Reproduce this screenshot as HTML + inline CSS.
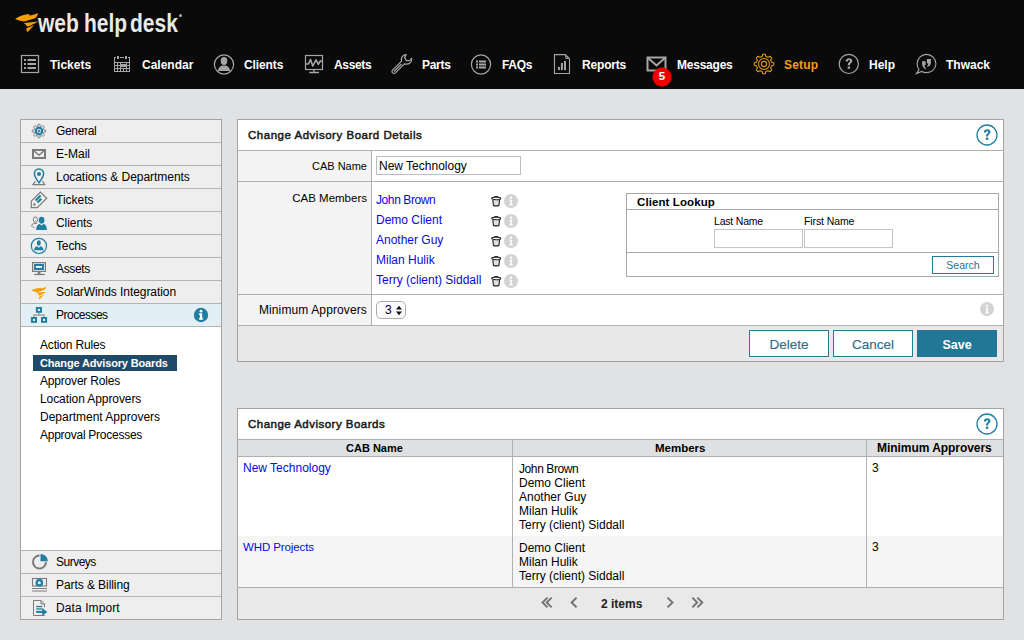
<!DOCTYPE html>
<html><head><meta charset="utf-8">
<style>
*{box-sizing:border-box;margin:0;padding:0}
html,body{width:1024px;height:640px;overflow:hidden;background:#e1e2e4;font-family:"Liberation Sans",sans-serif;color:#000}
.a{position:absolute;white-space:nowrap}
#hdr{position:absolute;left:0;top:0;width:1024px;height:89px;background:#0a0a0a}
.nav{position:absolute;top:58px;font-size:12px;font-weight:bold;color:#fff;line-height:14px}
.nicon{position:absolute}
#side{position:absolute;left:20px;top:119px;width:202px;height:501px;background:#fff;border:1px solid #a3a3a3}
.srow{position:absolute;left:0;width:200px;height:23px;background:#eeeeee;border-bottom:1px solid #b3b3b3}
.srow .t{position:absolute;left:35px;top:4px;font-size:12px;line-height:14px;color:#000}
.srow svg{position:absolute}
.sub{position:absolute;left:19px;font-size:12px;line-height:14px;color:#000}
.panel{position:absolute;left:237px;width:767px;background:#fff;border:1px solid #a3a3a3}
.ptitle{position:absolute;left:10px;font-size:11.5px;font-weight:bold;color:#222;line-height:14px}
.lbl{position:absolute;font-size:12px;line-height:14px;color:#000;text-align:right}
.lnk{position:absolute;font-size:12px;line-height:14px;color:#0808e6}
</style></head><body>
<div id="hdr">
<svg class="a" style="left:0;top:0" width="50" height="40" viewBox="0 0 50 40">
<path fill="#f5a000" d="M15.2,19 C19,16.2 24.5,14.6 29.6,14.1 L28.9,15.6 C32.5,15 36,14 38,12.9 C37.6,15.4 36.6,17 35,18.2 C31,19.6 27,20.6 23.8,21.6 C20.5,21 17.5,20.1 15.2,19 Z"/>
<path fill="#f5a000" d="M24,22.9 L38.3,21.4 C35,23.4 31,25.3 27.6,26.7 Z"/>
<path fill="#f5a000" d="M26.1,28.4 L34.5,25 L27.3,32.3 Z"/>
</svg>
<div class="a" style="left:38px;top:11px;font-size:25px;font-weight:bold;color:#e9e9e9;line-height:24px;transform:scaleX(0.84);transform-origin:0 0">web</div><div class="a" style="left:84px;top:11px;font-size:25px;font-weight:bold;color:#e9e9e9;line-height:24px;transform:scaleX(0.84);transform-origin:0 0">help</div><div class="a" style="left:130px;top:11px;font-size:25px;font-weight:bold;color:#e9e9e9;line-height:24px;transform:scaleX(0.84);transform-origin:0 0">desk</div>
<div class="a" style="left:179px;top:14px;width:3px;height:3px;border-radius:50%;background:#aaa"></div>

<svg class="a" style="left:20px;top:54px" width="20" height="20" viewBox="0 0 20 20" fill="none" stroke="#a6a6a6">
<rect x="1.5" y="1.5" width="17" height="17" stroke-width="1.2"/>
<g fill="#a6a6a6" stroke="none"><rect x="4" y="5" width="2" height="2"/><rect x="4" y="9" width="2" height="2"/><rect x="4" y="13" width="2" height="2"/>
<rect x="7.5" y="5" width="8.5" height="2"/><rect x="7.5" y="9" width="8.5" height="2"/><rect x="7.5" y="13" width="8.5" height="2"/></g>
</svg>
<div class="nav" style="left:50px">Tickets</div>

<svg class="a" style="left:110px;top:52px" width="24" height="24" viewBox="0 0 24 24" shape-rendering="crispEdges"><g fill="#a6a6a6"><rect x="4" y="5" width="1" height="15"/><rect x="19" y="5" width="1" height="15"/><rect x="4" y="19" width="16" height="1"/><rect x="4" y="5" width="2" height="1"/><rect x="18" y="5" width="2" height="1"/><rect x="7" y="4" width="2" height="3"/><rect x="15" y="4" width="2" height="3"/><rect x="10" y="5" width="4" height="1"/><rect x="4" y="10" width="16" height="1"/><rect x="4" y="13" width="16" height="1"/><rect x="4" y="16" width="16" height="1"/><rect x="7" y="10" width="1" height="10"/><rect x="10" y="10" width="1" height="10"/><rect x="13" y="10" width="1" height="10"/><rect x="16" y="10" width="1" height="10"/></g><rect x="11" y="11" width="5" height="2" fill="#0b0b0b"/><rect x="11" y="14" width="5" height="2" fill="#0b0b0b"/><rect x="11" y="12" width="5" height="3" fill="#a6a6a6"/></svg>
<div class="nav" style="left:142px">Calendar</div>

<svg class="a" style="left:213px;top:54px" width="22" height="22" viewBox="0 0 22 22">
<circle cx="11" cy="10.5" r="9.6" fill="none" stroke="#a6a6a6" stroke-width="1.2"/>
<ellipse cx="11" cy="7" rx="3.3" ry="4" fill="#a6a6a6"/>
<path d="M5,17 C5,13.5 7.5,11.5 11,11.5 C14.5,11.5 17,13.5 17,17 Z" fill="#a6a6a6"/>
</svg>
<div class="nav" style="left:244px;letter-spacing:-0.1px">Clients</div>

<svg class="a" style="left:304px;top:54px" width="20" height="20" viewBox="0 0 20 20" fill="none" stroke="#a6a6a6">
<rect x="1.5" y="1.5" width="17" height="14" stroke-width="1.2"/>
<path d="M2.1,10 H4.5 L6.5,5.4 L8.8,12 L12,5.8 L14.4,10.4 L16.3,7 H18" stroke-width="1.6" stroke-linejoin="round"/>
<path d="M9.9,15.5 V18 M5.2,18.5 H15" stroke-width="1.3"/>
</svg>
<div class="nav" style="left:334px;letter-spacing:-0.34px">Assets</div>

<svg class="a" style="left:391px;top:54px" width="22" height="21" viewBox="0 0 22 21" fill="none" stroke="#a6a6a6" stroke-width="1.2" stroke-linejoin="round">
<path d="M10.6,7.1 C9.6,3.6 12,0.8 15.2,0.7 L13.6,3.6 L15.4,6.6 L18.6,6.6 L20.7,4.4 C21.3,8.2 18,11 13.4,9.9 L4.4,18.9 C3.6,19.7 2.4,19.7 1.6,18.9 C0.8,18.1 0.8,16.9 1.6,16.1 Z"/>
<path d="M3,17.5 L10.5,10"/>
</svg>
<div class="nav" style="left:422px;letter-spacing:-0.3px">Parts</div>

<svg class="a" style="left:470px;top:54px" width="22" height="22" viewBox="0 0 22 22">
<circle cx="11" cy="10.5" r="9.6" fill="none" stroke="#a6a6a6" stroke-width="1.2"/>
<g fill="#a6a6a6"><rect x="6" y="6.5" width="2" height="2"/><rect x="6" y="9.5" width="2" height="2"/><rect x="6" y="12.5" width="2" height="2"/>
<rect x="9" y="6.5" width="7" height="2"/><rect x="9" y="9.5" width="7" height="2"/><rect x="9" y="12.5" width="7" height="2"/></g>
</svg>
<div class="nav" style="left:502px;letter-spacing:-0.34px">FAQs</div>

<svg class="a" style="left:553px;top:54px" width="18" height="21" viewBox="0 0 18 21" fill="none" stroke="#a6a6a6" stroke-width="1.1">
<path d="M1.5,0.6 H12.3 L16.5,4.8 V19.5 H1.5 Z"/>
<path d="M12.6,1.6 V4.5 H15.5 Z" stroke-width="0.9"/>
<g fill="#a6a6a6" stroke="none"><rect x="4.9" y="12.9" width="2" height="3.2"/><rect x="7.9" y="8.9" width="2" height="7.2"/><rect x="11" y="6.9" width="2" height="9.2"/></g>
</svg>
<div class="nav" style="left:582px;letter-spacing:-0.18px">Reports</div>

<svg class="a" style="left:646px;top:56px" width="22" height="16" viewBox="0 0 22 16" fill="none" stroke="#a6a6a6" stroke-width="2">
<rect x="1.5" y="1.5" width="18" height="13"/>
<path d="M1.5,1.5 L10.5,9.5 L19.5,1.5"/>
</svg>
<svg class="a" style="left:652px;top:67px" width="20" height="20" viewBox="0 0 20 20"><polygon points="20.00,10.00 18.84,11.07 19.71,12.39 18.32,13.16 18.85,14.65 17.32,15.06 17.49,16.63 15.90,16.66 15.68,18.23 14.14,17.88 13.55,19.35 12.13,18.64 11.21,19.93 10.00,18.90 8.79,19.93 7.87,18.64 6.45,19.35 5.86,17.88 4.32,18.23 4.10,16.66 2.51,16.63 2.68,15.06 1.15,14.65 1.68,13.16 0.29,12.39 1.16,11.07 0.00,10.00 1.16,8.93 0.29,7.61 1.68,6.84 1.15,5.35 2.68,4.94 2.51,3.37 4.10,3.34 4.32,1.77 5.86,2.12 6.45,0.65 7.87,1.36 8.79,0.07 10.00,1.10 11.21,0.07 12.13,1.36 13.55,0.65 14.14,2.12 15.68,1.77 15.90,3.34 17.49,3.37 17.32,4.94 18.85,5.35 18.32,6.84 19.71,7.61 18.84,8.93" fill="#f20000"/></svg>
<div class="a" style="left:652px;top:70px;width:20px;text-align:center;font-size:11.5px;font-weight:bold;color:#fff;line-height:13px">5</div>
<div class="nav" style="left:677px;letter-spacing:-0.23px">Messages</div>

<svg class="a" style="left:753px;top:53px" width="22" height="22" viewBox="0 0 22 22" fill="none" stroke="#e39b1f" stroke-width="1.1">
<path d="M20.71,9.70 L20.71,12.30 L18.58,12.82 L17.65,15.08 L18.79,16.95 L16.95,18.79 L15.08,17.65 L12.82,18.58 L12.30,20.71 L9.70,20.71 L9.18,18.58 L6.92,17.65 L5.05,18.79 L3.21,16.95 L4.35,15.08 L3.42,12.82 L1.29,12.30 L1.29,9.70 L3.42,9.18 L4.35,6.92 L3.21,5.05 L5.05,3.21 L6.92,4.35 L9.18,3.42 L9.70,1.29 L12.30,1.29 L12.82,3.42 L15.08,4.35 L16.95,3.21 L18.79,5.05 L17.65,6.92 L18.58,9.18 Z" stroke-linejoin="round"/>
<circle cx="11" cy="11" r="5.5"/>
<circle cx="11" cy="11" r="2.6"/>
</svg>
<div class="nav" style="left:784px;color:#f79b1c;letter-spacing:0.19px">Setup</div>

<svg class="a" style="left:838px;top:53px" width="22" height="22" viewBox="0 0 22 22">
<circle cx="10.8" cy="10.9" r="9.6" fill="none" stroke="#a6a6a6" stroke-width="1.2"/>
<path d="M7.6,8.4 C7.6,6.2 9.2,5.2 11,5.2 C12.9,5.2 14.3,6.3 14.3,8 C14.3,9.9 12,10.3 12,11.8 V12.3 H9.8 V11.6 C9.8,9.6 12,9.3 12,8.1 C12,7.5 11.6,7.1 11,7.1 C10.3,7.1 9.9,7.6 9.9,8.4 Z" fill="#a6a6a6"/>
<rect x="9.7" y="13.5" width="2.4" height="2.3" fill="#a6a6a6"/>
</svg>
<div class="nav" style="left:869px">Help</div>

<svg class="a" style="left:914px;top:53px" width="24" height="23" viewBox="0 0 24 23" fill="none" stroke="#a6a6a6" stroke-width="1.1">
<path d="M5,16.6 C3.8,15 3.1,13 3.1,10.8 C3.1,5.6 7.3,1.4 12.5,1.4 C17.7,1.4 21.9,5.6 21.9,10.8 C21.9,16 17.7,19.6 12.5,19.6 C10.8,19.6 9.2,19.2 7.8,18.4 L2.4,20.6 Z"/>
<path d="M8.1,8.2 H11.6 V11.9 L10.4,12 C10.7,13.6 11.4,14.8 12.3,15.9 L11.7,16.3 C9.6,15 8.1,13.2 8.1,11 Z" fill="#a6a6a6" stroke="none"/>
<path d="M12.9,6.1 H16.9 V9.8 C16.9,12 15.6,13.4 13.4,13.7 L13.1,13 C13.9,12.3 14.3,11.5 14.3,10.4 L12.9,10.3 Z" fill="#a6a6a6" stroke="none"/>
</svg>
<div class="nav" style="left:946px">Thwack</div>
</div>
<div id="side">
<div class="srow" style="top:0"><svg style="left:10px;top:3px" width="16" height="16" viewBox="0 0 16 16"><path d="M7.09,1.26 L8.91,1.26 L9.21,2.94 L10.72,3.57 L12.13,2.59 L13.41,3.87 L12.43,5.28 L13.06,6.79 L14.74,7.09 L14.74,8.91 L13.06,9.21 L12.43,10.72 L13.41,12.13 L12.13,13.41 L10.72,12.43 L9.21,13.06 L8.91,14.74 L7.09,14.74 L6.79,13.06 L5.28,12.43 L3.87,13.41 L2.59,12.13 L3.57,10.72 L2.94,9.21 L1.26,8.91 L1.26,7.09 L2.94,6.79 L3.57,5.28 L2.59,3.87 L3.87,2.59 L5.28,3.57 L6.79,2.94 Z" fill="none" stroke="#7b7b7b" stroke-width="0.9" stroke-linejoin="round"/><circle cx="8" cy="8" r="3.3" fill="none" stroke="#1f7ea1" stroke-width="2.2"/><circle cx="8" cy="8" r="1.5" fill="#7b7b7b"/></svg><div class="t" style="letter-spacing:-0.34px">General</div></div>
<div class="srow" style="top:23px"><svg style="left:10px;top:5px" width="16" height="12" viewBox="0 0 16 12"><rect x="1" y="1" width="14" height="10" fill="#7b7b7b"/><rect x="3" y="3" width="10" height="6" fill="#eee"/><path d="M3,3 L8,7 L13,3" fill="none" stroke="#7b7b7b" stroke-width="1.5"/></svg><div class="t">E-Mail</div></div>
<div class="srow" style="top:46px"><svg style="left:11px;top:2px" width="16" height="19" viewBox="0 0 16 19"><path d="M3.4,13.1 L1,16.6 H12.8 L10.4,13.1" fill="none" stroke="#7b7b7b" stroke-width="1.1"/><path d="M7,14.8 C5,12 2.4,9 2.4,5.6 C2.4,3 4.4,1 7,1 C9.6,1 11.6,3 11.6,5.6 C11.6,9 9,12 7,14.8 Z" fill="#eee" stroke="#1f7ea1" stroke-width="1.5"/><circle cx="7" cy="5.9" r="2" fill="#1f7ea1"/></svg><div class="t" style="letter-spacing:-0.04px">Locations &amp; Departments</div></div>
<div class="srow" style="top:69px"><svg style="left:9px;top:2px" width="18" height="18" viewBox="0 0 18 18"><path d="M1.3,10.2 L10.4,1.1 L16.7,7.3 L7.3,16.6 H1.3 Z" fill="none" stroke="#7b7b7b" stroke-width="1.2" stroke-linejoin="miter"/><path d="M5.6,9.6 L10.6,4.6 M7.5,11.5 L11.3,7.7" stroke="#1f7ea1" stroke-width="2.1"/><rect x="3.3" y="12.4" width="2.2" height="2.2" fill="#7b7b7b"/></svg><div class="t">Tickets</div></div>
<div class="srow" style="top:92px"><svg style="left:10px;top:4px" width="18" height="15" viewBox="0 0 18 15"><ellipse cx="4.4" cy="3.6" rx="2.1" ry="2.7" fill="none" stroke="#7b7b7b" stroke-width="1"/><path d="M5.9,7.3 C3,7.3 0.7,8 0.7,9.4 C0.7,10.8 2,11.4 3.6,11.6" fill="none" stroke="#7b7b7b" stroke-width="1"/><ellipse cx="10.6" cy="4.2" rx="2.8" ry="3.4" fill="#1f7ea1"/><path d="M5.1,13.9 C5.1,10.5 6.5,8.2 8.8,7.9 L10.6,9.4 L12.4,7.9 C14.7,8.2 15.9,10.5 15.9,13.9 Z" fill="#1f7ea1"/></svg><div class="t" style="letter-spacing:-0.07px">Clients</div></div>
<div class="srow" style="top:115px"><svg style="left:9px;top:2px" width="18" height="18" viewBox="0 0 18 18"><circle cx="8.9" cy="8.9" r="7.6" fill="none" stroke="#1f7ea1" stroke-width="1.2"/><ellipse cx="8.8" cy="6" rx="2" ry="2.7" fill="#1f7ea1"/><path d="M4.1,13.2 C4.1,10.8 5.5,9.5 7.4,9.3 L8.8,11 L10.2,9.3 C12.1,9.5 13.5,10.8 13.5,13.2 Z" fill="#1f7ea1"/></svg><div class="t" style="letter-spacing:-0.13px">Techs</div></div>
<div class="srow" style="top:138px"><svg style="left:11px;top:4px" width="16" height="15" viewBox="0 0 16 15"><rect x="0.6" y="0.6" width="12.8" height="8.8" fill="none" stroke="#7b7b7b" stroke-width="1.2"/><rect x="2.1" y="1.9" width="9.8" height="6.1" fill="#1f7ea1"/><rect x="3.9" y="4" width="6.1" height="1.8" fill="#fff"/><rect x="5.6" y="9.8" width="2.9" height="2.1" fill="#7b7b7b"/><rect x="2.1" y="11.9" width="10.8" height="1.2" fill="#7b7b7b"/></svg><div class="t" style="letter-spacing:-0.34px">Assets</div></div>
<div class="srow" style="top:161px"><svg style="left:9px;top:4px" width="18" height="15" viewBox="0 0 18 15"><path fill="#f5a000" d="M1.2,5.5 C4,3.8 8,3 11.5,2.8 L11,3.6 C13,3.3 15,2.6 16.2,1.5 C16,3 15.2,4.2 14,5 C11.5,6 9,6.8 7,7.5 C5,7 3,6.3 1.2,5.5 Z M7,7.6 L16.4,7 C14.2,8.4 11.7,9.7 9.4,10.8 Z M8.8,12 L14,9.6 L9.6,14.4 Z"/></svg><div class="t" style="letter-spacing:-0.06px">SolarWinds Integration</div></div>
<div class="srow" style="top:184px;background:#e2eff5"><svg style="left:9px;top:2px" width="18" height="19" viewBox="0 0 18 19"><path d="M9,6.7 V9 M4,11 V9 H14 V11" fill="none" stroke="#a3a3a3" stroke-width="1.4"/><rect x="5.9" y="1" width="6.1" height="5.8" fill="#1f7ea1"/><rect x="7.95" y="2.9" width="2" height="2" fill="#fff"/><rect x="0.9" y="11" width="6.1" height="5.8" fill="#1f7ea1"/><rect x="2.9499999999999997" y="12.9" width="2" height="2" fill="#fff"/><rect x="11" y="11" width="6.1" height="5.8" fill="#1f7ea1"/><rect x="13.05" y="12.9" width="2" height="2" fill="#fff"/></svg><div class="t" style="letter-spacing:-0.49px">Processes</div>
<svg style="left:172px;top:3px" width="16" height="16" viewBox="0 0 16 16"><circle cx="8" cy="8" r="7.2" fill="#1f7ea1"/><rect x="6.8" y="6.5" width="2.4" height="6" fill="#fff"/><rect x="5.8" y="6.5" width="3" height="1.3" fill="#fff"/><rect x="5.8" y="11.3" width="4.4" height="1.3" fill="#fff"/><circle cx="8" cy="4.2" r="1.4" fill="#fff"/></svg></div>
<div class="sub" style="top:218px;letter-spacing:-0.18px">Action Rules</div>
<div class="a" style="left:12px;top:235px;width:144px;height:16px;background:#1f4a69"></div>
<div class="sub" style="top:236px;color:#fff;font-weight:bold;font-size:11px;letter-spacing:-0.15px">Change Advisory Boards</div>
<div class="sub" style="top:254px;letter-spacing:-0.19px">Approver Roles</div>
<div class="sub" style="top:272px;letter-spacing:-0.08px">Location Approvers</div>
<div class="sub" style="top:290px">Department Approvers</div>
<div class="sub" style="top:308px;letter-spacing:-0.26px">Approval Processes</div>
<div class="srow" style="top:430px;border-top:1px solid #b3b3b3;border-bottom:none"><svg style="left:10px;top:2px" width="18" height="18" viewBox="0 0 18 18"><path d="M8.5,2.5 A6.5,6.5 0 1 0 15,9" fill="none" stroke="#7b7b7b" stroke-width="2"/><path d="M9.5,1 V8.2 H16.8 C16.8,4.2 13.5,1 9.5,1 Z" fill="#1f7ea1"/></svg><div class="t" style="letter-spacing:-0.5px">Surveys</div></div>
<div class="srow" style="top:453px;border-top:1px solid #b3b3b3;border-bottom:none"><svg style="left:10px;top:3px" width="18" height="16" viewBox="0 0 18 16"><rect x="1.5" y="1.5" width="14" height="7.5" fill="none" stroke="#7b7b7b" stroke-width="1.1"/><circle cx="8.3" cy="5.7" r="2.7" fill="#eee" stroke="#1f7ea1" stroke-width="2.3"/><path d="M1,11.5 H16 M1,14 H16" stroke="#7b7b7b" stroke-width="1"/></svg><div class="t" style="letter-spacing:-0.07px">Parts &amp; Billing</div></div>
<div class="srow" style="top:476px;border-top:1px solid #b3b3b3;border-bottom:none"><svg style="left:11px;top:3px" width="18" height="17" viewBox="0 0 18 17"><path d="M12.5,7.2 V4 L9,0.5 H1.5 V15.5 H12.5 V14.8 M9,0.5 V4 H12.5" fill="none" stroke="#7b7b7b" stroke-width="1"/><rect x="4.2" y="5.9" width="6" height="1.3" fill="#1f7ea1"/><rect x="4.2" y="8.3" width="6" height="1.3" fill="#1f7ea1"/><rect x="4.2" y="10.9" width="7" height="2" fill="#1f7ea1"/><path d="M10.2,8 L15.4,11.9 L10.2,15.8 Z" fill="#1f7ea1"/></svg><div class="t" style="letter-spacing:0.09px">Data Import</div></div>
</div>
<div class="panel" style="top:119px;height:243px"></div>
<div class="a" style="left:248px;top:128px;font-size:11.5px;font-weight:normal;color:#1a1a1a;line-height:14px;letter-spacing:0.52px;-webkit-text-stroke:0.5px #1a1a1a">Change Advisory Board Details</div>
<svg class="a" style="left:976px;top:124px" width="22" height="22" viewBox="0 0 22 22"><circle cx="11" cy="11" r="10" fill="#fff" stroke="#1f7ea1" stroke-width="1.3"/><path d="M7.8,8.6 C7.8,6.3 9.4,5.3 11.2,5.3 C13.1,5.3 14.5,6.4 14.5,8.1 C14.5,10 12.2,10.4 12.2,11.9 V12.4 H10 V11.7 C10,9.7 12.2,9.4 12.2,8.2 C12.2,7.6 11.8,7.2 11.2,7.2 C10.5,7.2 10.1,7.7 10.1,8.6 Z" fill="#1f7ea1"/><rect x="9.9" y="13.6" width="2.4" height="2.3" fill="#1f7ea1"/></svg>
<div class="a" style="left:238px;top:150px;width:765px;height:1px;background:#b0b0b0"></div>
<div class="a" style="left:238px;top:151px;width:133px;height:174px;background:#f4f4f4"></div>
<div class="a" style="left:371px;top:151px;width:1px;height:174px;background:#b0b0b0"></div>
<div class="a" style="left:238px;top:181px;width:765px;height:1px;background:#b0b0b0"></div>
<div class="a" style="left:238px;top:294px;width:765px;height:1px;background:#b0b0b0"></div>
<div class="a" style="left:238px;top:325px;width:765px;height:1px;background:#b0b0b0"></div>
<div class="a" style="left:238px;top:326px;width:765px;height:35px;background:#e8e8e8"></div>
<div class="lbl" style="left:240px;width:127px;top:159px;font-size:11px">CAB Name</div>
<div class="lbl" style="left:240px;width:127px;top:191px;font-size:11.5px">CAB Members</div>
<div class="lbl" style="left:240px;width:127px;top:303px;letter-spacing:0.12px">Minimum Approvers</div>
<div class="a" style="left:376px;top:156px;width:145px;height:19px;border:1px solid #bdbdbd;background:#fff"></div>
<div class="a" style="left:379px;top:159px;font-size:12px;line-height:14px;color:#000">New Technology</div>
<div class="lnk" style="left:376px;top:193px;letter-spacing:-0.4px">John Brown</div><svg class="a" style="left:491px;top:195px" width="12" height="12" viewBox="0 0 12 12"><rect x="3.3" y="0.9" width="3.8" height="1.6" rx="0.6" fill="#333"/><path d="M1.8,4.4 L2.4,10.2 C2.5,10.6 2.8,10.9 3.2,10.9 H7.2 C7.6,10.9 7.9,10.6 8,10.2 L8.6,4.4" fill="#d4d4d4" stroke="#222" stroke-width="1.1"/><path d="M4,5.3 V9.8 M5.2,5.3 V9.8 M6.4,5.3 V9.8" stroke="#f2f2f2" stroke-width="0.6"/><ellipse cx="5.2" cy="3.4" rx="4.5" ry="1.3" fill="#fff" stroke="#222" stroke-width="1.1"/></svg><svg class="a" style="left:504px;top:194px" width="14" height="14" viewBox="0 0 14 14"><circle cx="7" cy="7" r="7" fill="#d3d3d3"/><circle cx="7" cy="3.6" r="1.2" fill="#fff"/><path d="M5.4,5.8 H7.9 V10.6 H9 V11.6 H5.2 V10.6 H6.3 V6.8 H5.4 Z" fill="#fff"/></svg><div class="lnk" style="left:376px;top:213px">Demo Client</div><svg class="a" style="left:491px;top:215px" width="12" height="12" viewBox="0 0 12 12"><rect x="3.3" y="0.9" width="3.8" height="1.6" rx="0.6" fill="#333"/><path d="M1.8,4.4 L2.4,10.2 C2.5,10.6 2.8,10.9 3.2,10.9 H7.2 C7.6,10.9 7.9,10.6 8,10.2 L8.6,4.4" fill="#d4d4d4" stroke="#222" stroke-width="1.1"/><path d="M4,5.3 V9.8 M5.2,5.3 V9.8 M6.4,5.3 V9.8" stroke="#f2f2f2" stroke-width="0.6"/><ellipse cx="5.2" cy="3.4" rx="4.5" ry="1.3" fill="#fff" stroke="#222" stroke-width="1.1"/></svg><svg class="a" style="left:504px;top:214px" width="14" height="14" viewBox="0 0 14 14"><circle cx="7" cy="7" r="7" fill="#d3d3d3"/><circle cx="7" cy="3.6" r="1.2" fill="#fff"/><path d="M5.4,5.8 H7.9 V10.6 H9 V11.6 H5.2 V10.6 H6.3 V6.8 H5.4 Z" fill="#fff"/></svg><div class="lnk" style="left:376px;top:233px">Another Guy</div><svg class="a" style="left:491px;top:235px" width="12" height="12" viewBox="0 0 12 12"><rect x="3.3" y="0.9" width="3.8" height="1.6" rx="0.6" fill="#333"/><path d="M1.8,4.4 L2.4,10.2 C2.5,10.6 2.8,10.9 3.2,10.9 H7.2 C7.6,10.9 7.9,10.6 8,10.2 L8.6,4.4" fill="#d4d4d4" stroke="#222" stroke-width="1.1"/><path d="M4,5.3 V9.8 M5.2,5.3 V9.8 M6.4,5.3 V9.8" stroke="#f2f2f2" stroke-width="0.6"/><ellipse cx="5.2" cy="3.4" rx="4.5" ry="1.3" fill="#fff" stroke="#222" stroke-width="1.1"/></svg><svg class="a" style="left:504px;top:234px" width="14" height="14" viewBox="0 0 14 14"><circle cx="7" cy="7" r="7" fill="#d3d3d3"/><circle cx="7" cy="3.6" r="1.2" fill="#fff"/><path d="M5.4,5.8 H7.9 V10.6 H9 V11.6 H5.2 V10.6 H6.3 V6.8 H5.4 Z" fill="#fff"/></svg><div class="lnk" style="left:376px;top:253px">Milan Hulik</div><svg class="a" style="left:491px;top:255px" width="12" height="12" viewBox="0 0 12 12"><rect x="3.3" y="0.9" width="3.8" height="1.6" rx="0.6" fill="#333"/><path d="M1.8,4.4 L2.4,10.2 C2.5,10.6 2.8,10.9 3.2,10.9 H7.2 C7.6,10.9 7.9,10.6 8,10.2 L8.6,4.4" fill="#d4d4d4" stroke="#222" stroke-width="1.1"/><path d="M4,5.3 V9.8 M5.2,5.3 V9.8 M6.4,5.3 V9.8" stroke="#f2f2f2" stroke-width="0.6"/><ellipse cx="5.2" cy="3.4" rx="4.5" ry="1.3" fill="#fff" stroke="#222" stroke-width="1.1"/></svg><svg class="a" style="left:504px;top:254px" width="14" height="14" viewBox="0 0 14 14"><circle cx="7" cy="7" r="7" fill="#d3d3d3"/><circle cx="7" cy="3.6" r="1.2" fill="#fff"/><path d="M5.4,5.8 H7.9 V10.6 H9 V11.6 H5.2 V10.6 H6.3 V6.8 H5.4 Z" fill="#fff"/></svg><div class="lnk" style="left:376px;top:273px">Terry (client) Siddall</div><svg class="a" style="left:491px;top:275px" width="12" height="12" viewBox="0 0 12 12"><rect x="3.3" y="0.9" width="3.8" height="1.6" rx="0.6" fill="#333"/><path d="M1.8,4.4 L2.4,10.2 C2.5,10.6 2.8,10.9 3.2,10.9 H7.2 C7.6,10.9 7.9,10.6 8,10.2 L8.6,4.4" fill="#d4d4d4" stroke="#222" stroke-width="1.1"/><path d="M4,5.3 V9.8 M5.2,5.3 V9.8 M6.4,5.3 V9.8" stroke="#f2f2f2" stroke-width="0.6"/><ellipse cx="5.2" cy="3.4" rx="4.5" ry="1.3" fill="#fff" stroke="#222" stroke-width="1.1"/></svg><svg class="a" style="left:504px;top:274px" width="14" height="14" viewBox="0 0 14 14"><circle cx="7" cy="7" r="7" fill="#d3d3d3"/><circle cx="7" cy="3.6" r="1.2" fill="#fff"/><path d="M5.4,5.8 H7.9 V10.6 H9 V11.6 H5.2 V10.6 H6.3 V6.8 H5.4 Z" fill="#fff"/></svg>
<div class="a" style="left:626px;top:193px;width:373px;height:84px;border:1px solid #a8a8a8"></div>
<div class="a" style="left:627px;top:209px;width:371px;height:1px;background:#a8a8a8"></div>
<div class="a" style="left:627px;top:252px;width:371px;height:1px;background:#a8a8a8"></div>
<div class="a" style="left:637px;top:195px;font-size:11.5px;font-weight:bold;line-height:14px;color:#000;letter-spacing:0.1px">Client Lookup</div>
<div class="a" style="left:714px;top:215px;font-size:10.5px;line-height:13px;color:#000;letter-spacing:-0.2px">Last Name</div>
<div class="a" style="left:804px;top:215px;font-size:10.5px;line-height:13px;color:#000;letter-spacing:-0.1px">First Name</div>
<div class="a" style="left:714px;top:229px;width:89px;height:19px;border:1px solid #c4c4c4;background:#fff"></div>
<div class="a" style="left:804px;top:229px;width:89px;height:19px;border:1px solid #c4c4c4;background:#fff"></div>
<div class="a" style="left:932px;top:256px;width:62px;height:18px;border:1px solid #2a7899;background:#fff"></div>
<div class="a" style="left:932px;top:259px;width:62px;text-align:center;font-size:10.5px;line-height:13px;color:#2d6f8c">Search</div>
<div class="a" style="left:376px;top:301px;width:30px;height:18px;border:1px solid #ababab;border-radius:5px;background:#fbfbfb"></div>
<div class="a" style="left:385px;top:303px;font-size:12px;line-height:14px;color:#000">3</div>
<svg class="a" style="left:395px;top:305px" width="8" height="11" viewBox="0 0 8 11"><path d="M1,4.5 L4,0.8 L7,4.5 Z M1,6.5 L4,10.2 L7,6.5 Z" fill="#111"/></svg>
<svg class="a" style="left:980px;top:302px" width="14" height="14" viewBox="0 0 14 14"><circle cx="7" cy="7" r="7" fill="#d3d3d3"/><circle cx="7" cy="3.6" r="1.2" fill="#fff"/><path d="M5.4,5.8 H7.9 V10.6 H9 V11.6 H5.2 V10.6 H6.3 V6.8 H5.4 Z" fill="#fff"/></svg>
<div class="a" style="left:749px;top:330px;width:80px;height:27px;border:1px solid #2a7899;background:#fff"></div>
<div class="a" style="left:749px;top:337px;width:80px;text-align:center;font-size:13.5px;line-height:16px;color:#2d6f8c;-webkit-text-stroke:0.15px #2d6f8c">Delete</div>
<div class="a" style="left:833px;top:330px;width:80px;height:27px;border:1px solid #2a7899;background:#fff"></div>
<div class="a" style="left:833px;top:337px;width:80px;text-align:center;font-size:13.5px;line-height:16px;color:#2d6f8c;-webkit-text-stroke:0.15px #2d6f8c">Cancel</div>
<div class="a" style="left:917px;top:330px;width:80px;height:27px;background:#237796"></div>
<div class="a" style="left:917px;top:337px;width:80px;text-align:center;font-size:12.5px;font-weight:bold;line-height:16px;color:#fff">Save</div>

<div class="panel" style="top:408px;height:212px"></div>
<div class="a" style="left:248px;top:417px;font-size:11.5px;font-weight:normal;color:#1a1a1a;line-height:14px;letter-spacing:0.48px;-webkit-text-stroke:0.5px #1a1a1a">Change Advisory Boards</div>
<svg class="a" style="left:976px;top:413px" width="22" height="22" viewBox="0 0 22 22"><circle cx="11" cy="11" r="10" fill="#fff" stroke="#1f7ea1" stroke-width="1.3"/><path d="M7.8,8.6 C7.8,6.3 9.4,5.3 11.2,5.3 C13.1,5.3 14.5,6.4 14.5,8.1 C14.5,10 12.2,10.4 12.2,11.9 V12.4 H10 V11.7 C10,9.7 12.2,9.4 12.2,8.2 C12.2,7.6 11.8,7.2 11.2,7.2 C10.5,7.2 10.1,7.7 10.1,8.6 Z" fill="#1f7ea1"/><rect x="9.9" y="13.6" width="2.4" height="2.3" fill="#1f7ea1"/></svg>
<div class="a" style="left:238px;top:439px;width:765px;height:1px;background:#b0b0b0"></div>
<div class="a" style="left:238px;top:440px;width:765px;height:16px;background:#dfe0e2"></div>
<div class="a" style="left:238px;top:456px;width:765px;height:1px;background:#b0b0b0"></div>
<div class="a" style="left:238px;top:536px;width:765px;height:51px;background:#f5f5f5"></div>
<div class="a" style="left:512px;top:440px;width:1px;height:147px;background:#b0b0b0"></div>
<div class="a" style="left:866px;top:440px;width:1px;height:147px;background:#b0b0b0"></div>
<div class="a" style="left:238px;top:587px;width:765px;height:1px;background:#b0b0b0"></div>
<div class="a" style="left:238px;top:588px;width:765px;height:31px;background:#e9e9e9"></div>
<div class="a" style="left:346px;top:441px;font-size:11px;font-weight:bold;line-height:14px;color:#000">CAB Name</div>
<div class="a" style="left:655px;top:441px;font-size:11.5px;font-weight:bold;line-height:14px;color:#000">Members</div>
<div class="a" style="left:877px;top:441px;font-size:12px;font-weight:bold;line-height:14px;color:#000;letter-spacing:-0.05px">Minimum Approvers</div>
<div class="lnk" style="left:243px;top:461px">New Technology</div>
<div class="lnk" style="left:243px;top:540px;font-size:11.5px;letter-spacing:-0.1px">WHD Projects</div>
<div class="a" style="left:519px;top:462px;font-size:12px;line-height:14px;color:#000;letter-spacing:-0.4px">John Brown</div><div class="a" style="left:519px;top:476px;font-size:12px;line-height:14px;color:#000">Demo Client</div><div class="a" style="left:519px;top:490px;font-size:12px;line-height:14px;color:#000">Another Guy</div><div class="a" style="left:519px;top:504px;font-size:12px;line-height:14px;color:#000">Milan Hulik</div><div class="a" style="left:519px;top:518px;font-size:12px;line-height:14px;color:#000">Terry (client) Siddall</div><div class="a" style="left:519px;top:541px;font-size:12px;line-height:14px;color:#000">Demo Client</div><div class="a" style="left:519px;top:555px;font-size:12px;line-height:14px;color:#000">Milan Hulik</div><div class="a" style="left:519px;top:569px;font-size:12px;line-height:14px;color:#000">Terry (client) Siddall</div>
<div class="a" style="left:872px;top:461px;font-size:12px;line-height:14px;color:#000">3</div>
<div class="a" style="left:872px;top:540px;font-size:12px;line-height:14px;color:#000">3</div>
<svg class="a" style="left:540px;top:596px" width="166" height="14" viewBox="0 0 166 14" fill="none" stroke="#727272" stroke-width="1.9">
<path d="M7.5,1.6 L2.5,6.5 L7.5,11.4 M11.7,1.6 L6.7,6.5 L11.7,11.4"/>
<path d="M36.6,1.6 L31.6,6.5 L36.6,11.4"/>
<path d="M127.5,1.6 L132.5,6.5 L127.5,11.4"/>
<path d="M152.4,1.6 L157.2,6.5 L152.4,11.4 M157.4,1.6 L162.3,6.5 L157.4,11.4"/>
</svg>
<div class="a" style="left:601px;top:597px;font-size:12px;font-weight:bold;line-height:14px;color:#222">2 items</div>

</body></html>
